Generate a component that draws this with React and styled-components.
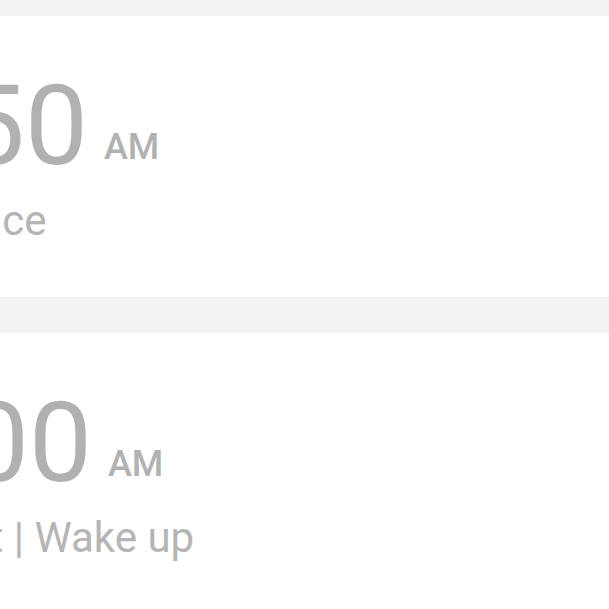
import React from "react";
import styled, { createGlobalStyle } from "styled-components";

const GlobalStyle = createGlobalStyle`
  html, body {
    margin: 0;
    padding: 0;
    background: #f2f3f5;
    overflow: hidden;
  }
`;

const List = styled.div`
  padding-top: 16px;
  display: flex;
  flex-direction: column;
  gap: 36px;
  width: 609px;
  height: 609px;
  overflow: hidden;
  font-family: Roboto, "Liberation Sans", sans-serif;
`;

const Card = styled.div`
  background: #ffffff;
  height: 281px;
  flex-shrink: 0;
  box-sizing: border-box;
  padding-top: 54px;
  overflow: hidden;
`;

const Content = styled.div`
  margin-left: ${(p) => p.$shift}px;
  display: flex;
  flex-direction: column;
  gap: 18px;
`;

const TimeRow = styled.div`
  display: flex;
  align-items: flex-end;
  gap: 16px;
  white-space: nowrap;
`;

const Time = styled.span`
  font-size: 112px;
  line-height: 1;
  color: #b1b1b1;
`;

const Meridiem = styled.span`
  font-size: 36px;
  line-height: 1;
  font-weight: 500;
  color: #b1b1b1;
  margin-bottom: 17px;
`;

const Label = styled.div`
  font-size: 42px;
  line-height: 1;
  color: #b5b5b5;
  white-space: nowrap;
`;

const alarms = [
  { time: "6:50", label: "Fri | Once", shift: -128 },
  { time: "7:00", label: "Fri, Sat | Wake up", shift: -124 },
];

export default function App() {
  return (
    <>
      <GlobalStyle />
      <List>
        {alarms.map((a) => (
          <Card key={a.time}>
            <Content $shift={a.shift}>
              <TimeRow>
                <Time>{a.time}</Time>
                <Meridiem>AM</Meridiem>
              </TimeRow>
              <Label>{a.label}</Label>
            </Content>
          </Card>
        ))}
      </List>
    </>
  );
}
